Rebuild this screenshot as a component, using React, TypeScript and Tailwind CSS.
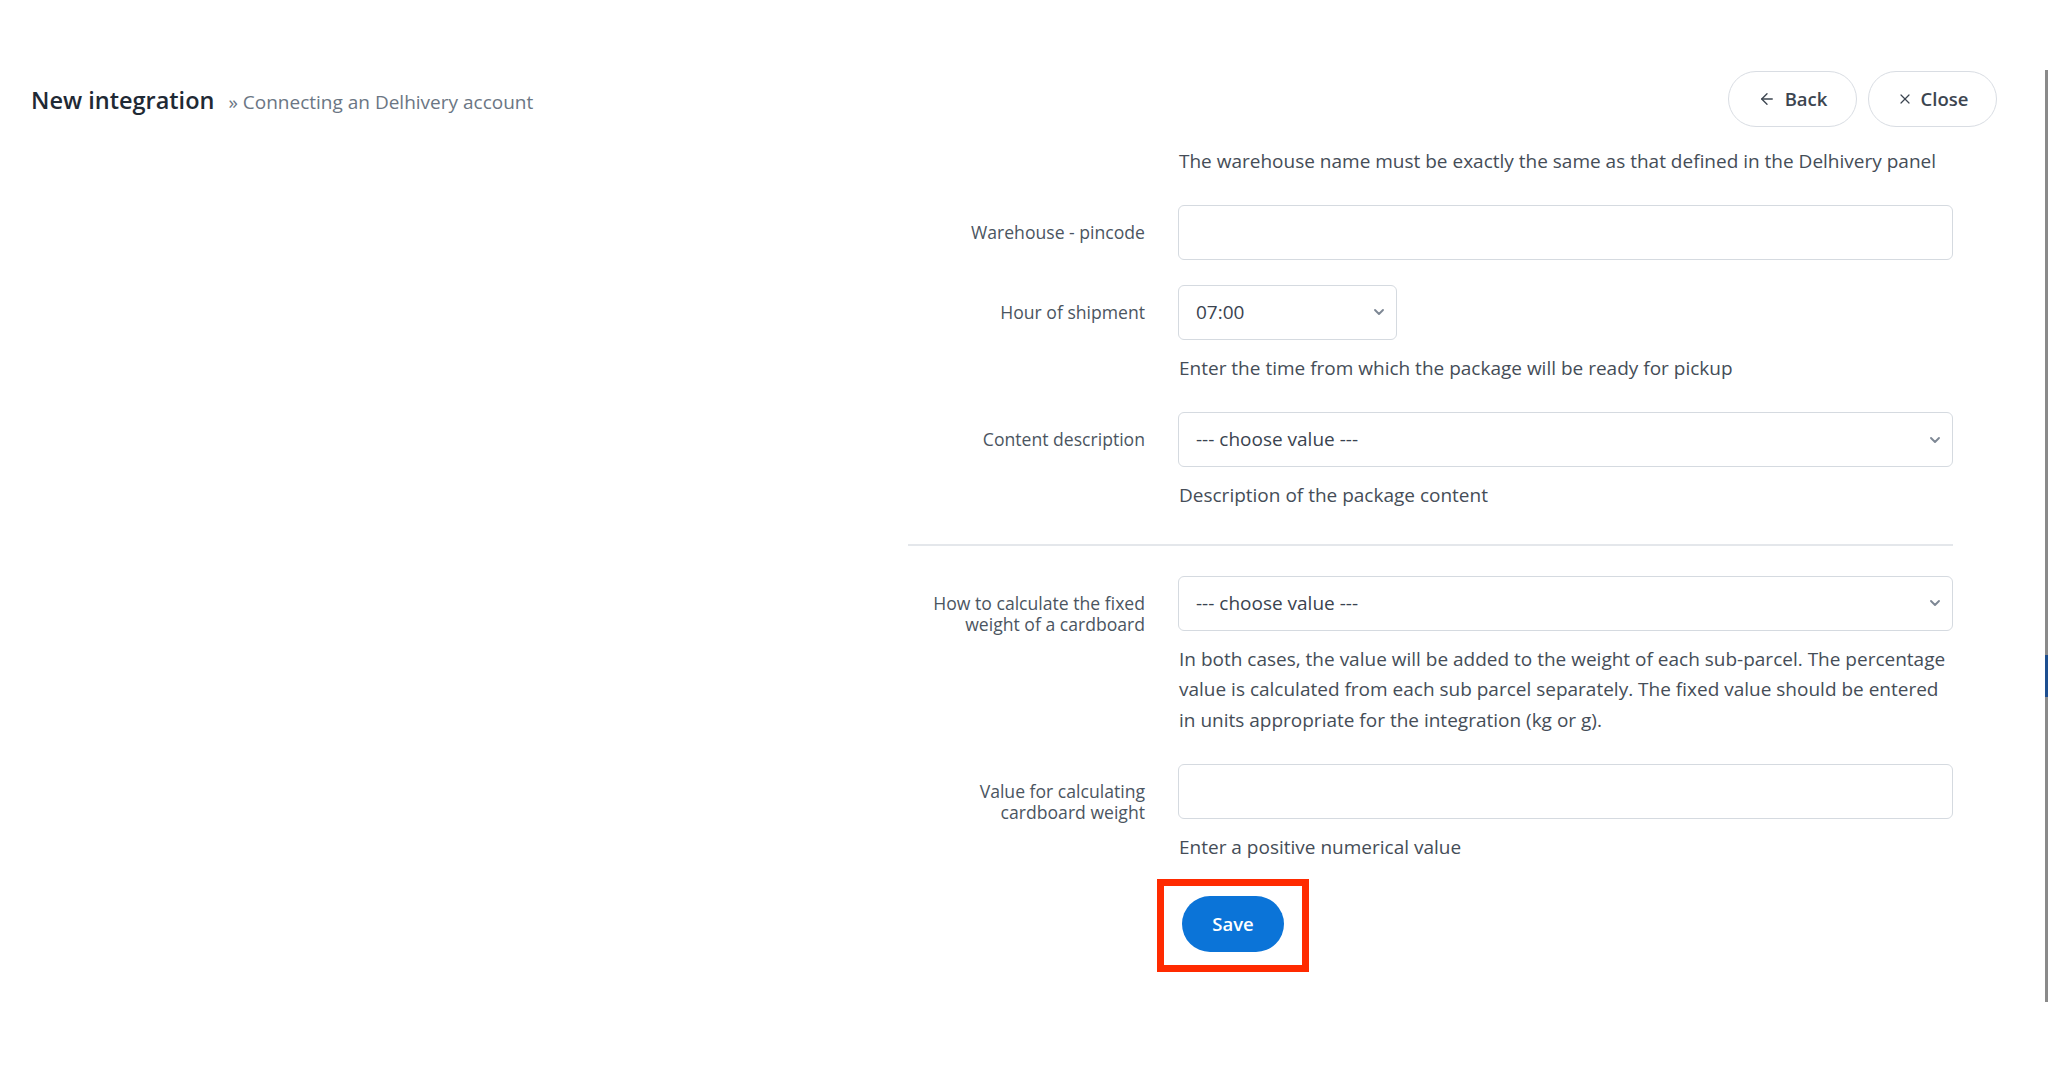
import { ArrowLeft, X, ChevronDown } from "lucide-react";
import type { ReactNode } from "react";

function Field({
  label,
  children,
  hint,
}: {
  label?: ReactNode;
  children?: ReactNode;
  hint?: ReactNode;
}) {
  return (
    <div className="grid grid-cols-[237px_1fr] gap-x-[33px]">
      <div className="pt-[17px] text-right text-[17.6px] leading-[21px] text-[#4b5561]">
        {label}
      </div>
      <div>
        {children}
        {hint && (
          <p className="mt-[13px] pl-px text-[19px] leading-[30.5px] text-[#454d57]">{hint}</p>
        )}
      </div>
    </div>
  );
}

function TextInput() {
  return (
    <input
      type="text"
      className="block h-[55px] w-full rounded-[6px] border border-[#d5dae0] bg-white px-[18px] text-[19px] text-[#3a4350] outline-none"
    />
  );
}

function Select({ value, narrow }: { value: string; narrow?: boolean }) {
  return (
    <div className={`relative ${narrow ? "w-[219px]" : "w-full"}`}>
      <select
        defaultValue={value}
        className="block h-[55px] w-full appearance-none rounded-[6px] border border-[#d5dae0] bg-white pl-[17px] pr-10 text-[19px] text-[#3a4350] outline-none"
      >
        <option>{value}</option>
      </select>
      <ChevronDown
        className="pointer-events-none absolute right-[10px] top-1/2 h-[16px] w-[16px] -translate-y-1/2 text-[#7d8794]"
        strokeWidth={2.8}
      />
    </div>
  );
}

export default function App() {
  return (
    <div className="flex min-h-[1072px] bg-white font-['Open_Sans',sans-serif]">
      <div className="flex-1 pl-[31px] pr-[48px] pt-[71px]">
        {/* Header */}
        <div className="flex items-center justify-between">
          <div className="mt-[4px] flex items-baseline gap-[14px]">
            <h1 className="text-[23.5px] font-semibold text-[#1f2a35]">New integration</h1>
            <span className="text-[19px] text-[#6b7684]">» Connecting an Delhivery account</span>
          </div>
          <div className="flex gap-[11px]">
            <button className="flex h-[56px] w-[129px] items-center justify-center gap-[9px] rounded-full border border-[#d9dde3] bg-white text-[18.5px] font-semibold text-[#3c4550]">
              <ArrowLeft className="h-[18px] w-[18px]" strokeWidth={1.8} />
              Back
            </button>
            <button className="flex h-[56px] w-[129px] items-center justify-center gap-[8px] rounded-full border border-[#d9dde3] bg-white text-[18.5px] font-semibold text-[#3c4550]">
              <X className="h-[16px] w-[16px]" strokeWidth={1.8} />
              Close
            </button>
          </div>
        </div>

        {/* Form */}
        <div className="ml-auto mr-[44px] w-[1045px]">
          <div className="mt-[19px] grid grid-cols-[237px_1fr] gap-x-[33px]">
            <div />
            <p className="pl-px text-[19px] leading-[30.5px] text-[#454d57]">
              The warehouse name must be exactly the same as that defined in the Delhivery panel
            </p>
          </div>

          <div className="mt-[28px]">
            <Field label="Warehouse - pincode">
              <TextInput />
            </Field>
          </div>

          <div className="mt-[25px]">
            <Field
              label="Hour of shipment"
              hint="Enter the time from which the package will be ready for pickup"
            >
              <Select value="07:00" narrow />
            </Field>
          </div>

          <div className="mt-[29px]">
            <Field label="Content description" hint="Description of the package content">
              <Select value="--- choose value ---" />
            </Field>
          </div>

          <div className="mt-[33px] h-[2px] bg-[#e4e7eb]" />

          <div className="mt-[30px]">
            <Field
              label={
                <>
                  How to calculate the fixed
                  <br />
                  weight of a cardboard
                </>
              }
              hint="In both cases, the value will be added to the weight of each sub-parcel. The percentage value is calculated from each sub parcel separately. The fixed value should be entered in units appropriate for the integration (kg or g)."
            >
              <Select value="--- choose value ---" />
            </Field>
          </div>

          <div className="mt-[29px]">
            <Field
              label={
                <>
                  Value for calculating
                  <br />
                  cardboard weight
                </>
              }
              hint="Enter a positive numerical value"
            >
              <TextInput />
            </Field>
          </div>

          <div className="mt-[16px] grid grid-cols-[237px_1fr] gap-x-[33px]">
            <div />
            <div className="-ml-[21px] w-fit border-[7px] border-[#ff2a00] px-[18px] pb-[13px] pt-[10px]">
              <button className="flex h-[56px] w-[102px] items-center justify-center rounded-full bg-[#0b74d8] text-[18.5px] font-semibold text-white">
                Save
              </button>
            </div>
          </div>
        </div>
      </div>

      {/* Right edge scroll bar */}
      <div className="mt-[70px] flex h-[932px] w-[3px] flex-col">
        <div className="h-[585px] bg-[#8a8a8a]" />
        <div className="h-[42px] bg-[#1e4f90]" />
        <div className="flex-1 bg-[#8a8a8a]" />
      </div>
    </div>
  );
}
